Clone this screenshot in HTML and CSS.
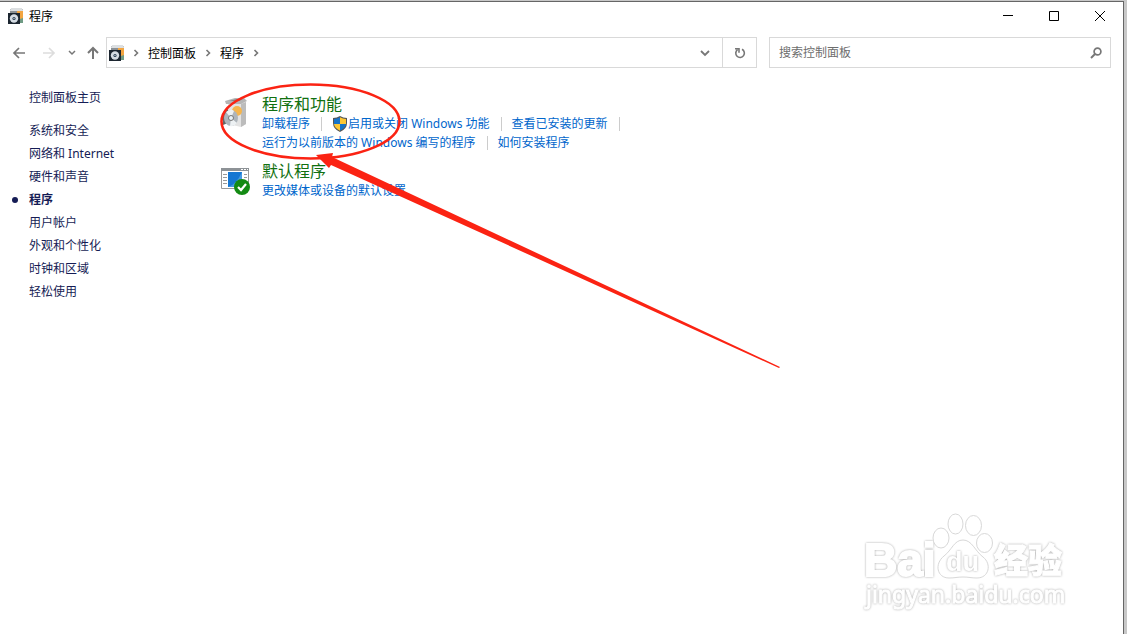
FILE: index.html
```html
<!DOCTYPE html>
<html lang="zh-CN">
<head>
  <meta charset="UTF-8">
  <meta name="viewport" content="width=device-width, initial-scale=1">
  <title>程序</title>
  <link rel="stylesheet" href="styles.css">
</head>
<body>
  <svg class="defs" width="0" height="0" aria-hidden="true">
    <symbol id="icon-programs" viewBox="0 0 16 16">
      <path d="M2 1h13l-1 3H3z" fill="#b9bdc1"/>
      <path d="M3 0h11v3H3z" fill="#dcdfe1"/>
      <path d="M2 3h7v3H2z" fill="#8b9094"/>
      <path d="M11 9h4v6h-4z" fill="#6f9b84"/>
      <path d="M9 3h6v7l-3 1-3-4z" fill="#f2a541"/>
      <path d="M0 5h12v11H0z" fill="#1c2630"/>
      <circle cx="6" cy="10.500" r="4.200" fill="#d5dce3"/>
      <circle cx="6" cy="10.500" r="1.600" fill="#2b4054"/>
      <circle cx="6" cy="10.500" r=".6" fill="#fff"/>
    </symbol>
    <symbol id="icon-chevron" viewBox="0 0 6 8">
      <path d="M1.500 1L4.500 4 1.500 7" fill="none" stroke="#777" stroke-width="1.600"/>
    </symbol>
  </svg>

  <div class="window">
    <header class="titlebar">
      <svg class="app-icon"><use href="#icon-programs"/></svg>
      <h1>程序</h1>
      <div class="window-buttons">
        <button type="button" aria-label="最小化"><svg width="12" height="12"><path d="M1 5.500h10" stroke="#000"/></svg></button>
        <button type="button" aria-label="最大化"><svg width="12" height="12"><path d="M1.500 1.500h9v9h-9z" fill="none" stroke="#000"/></svg></button>
        <button type="button" aria-label="关闭"><svg width="12" height="12"><path d="M1 1l10 10M11 1L1 11" stroke="#000"/></svg></button>
      </div>
    </header>

    <div class="toolbar">
      <div class="history">
        <button type="button" aria-label="后退"><svg width="14" height="12"><path d="M13 6H2M7 1L2 6l5 5" fill="none" stroke="#777" stroke-width="1.700"/></svg></button>
        <button type="button" aria-label="前进" disabled><svg width="14" height="12"><path d="M1 6h11M7 1l5 5-5 5" fill="none" stroke="#ddd" stroke-width="1.700"/></svg></button>
        <button type="button" class="recent" aria-label="最近浏览的位置"><svg width="8" height="6"><path d="M1 1l3 3 3-3" fill="none" stroke="#777" stroke-width="1.500"/></svg></button>
        <button type="button" class="up" aria-label="上移"><svg width="12" height="14"><path d="M6 13V2M1 7l5-5 5 5" fill="none" stroke="#777" stroke-width="2"/></svg></button>
      </div>
      <div class="address">
        <svg class="app-icon"><use href="#icon-programs"/></svg>
        <nav class="crumbs" aria-label="地址">
          <svg><use href="#icon-chevron"/></svg>
          <a href="#">控制面板</a>
          <svg><use href="#icon-chevron"/></svg>
          <a href="#">程序</a>
          <svg><use href="#icon-chevron"/></svg>
        </nav>
        <button type="button" class="dropdown" aria-label="以前的位置"><svg width="10" height="8"><path d="M1 2l4 4 4-4" fill="none" stroke="#777" stroke-width="1.800"/></svg></button>
        <button type="button" class="refresh" aria-label="刷新"><svg width="12" height="12"><path d="M8 2.300A4.300 4.300 0 1 1 3.500 2.700M1 1.800h4v4" fill="none" stroke="#777" stroke-width="1.600"/></svg></button>
      </div>
      <form class="search">
        <input type="text" placeholder="搜索控制面板" aria-label="搜索控制面板">
        <button type="button" aria-label="搜索"><svg width="12" height="12"><circle cx="7.500" cy="4.500" r="3.400" fill="none" stroke="#777" stroke-width="1.700"/><path d="M5 7l-4 4" stroke="#777" stroke-width="2"/></svg></button>
      </form>
    </div>

    <div class="content">
      <nav class="sidebar">
        <a class="home" href="#">控制面板主页</a>
        <ul>
          <li><a href="#">系统和安全</a></li>
          <li><a href="#">网络和 Internet</a></li>
          <li><a href="#">硬件和声音</a></li>
          <li class="current"><a href="#">程序</a></li>
          <li><a href="#">用户帐户</a></li>
          <li><a href="#">外观和个性化</a></li>
          <li><a href="#">时钟和区域</a></li>
          <li><a href="#">轻松使用</a></li>
        </ul>
      </nav>

      <main>
        <section class="category">
          <svg class="category-icon" viewBox="0 0 32 32">
            <path d="M8 5h14l4-1v22l-5 3-13-3z" fill="#e3e3e3"/>
            <path d="M21 6l5-2v22l-5 3z" fill="#bcbcbc"/>
            <path d="M5 3l10-3h9l3 3-6 3H6z" fill="#b5b5b5"/>
            <path d="M9 3l8-2h6l-4 2z" fill="#858585"/>
            <circle cx="17" cy="13" r="5" fill="#f5b54d"/>
            <path d="M3 14l5-3v14l-5 2z" fill="#666"/>
            <ellipse cx="11" cy="20" rx="7" ry="8" fill="#aeb5bb"/>
            <path d="M11 20L6 14q5-4 8-1zM11 20l6 5q-3 4-7 3z" fill="#edf1f3"/>
            <circle cx="11" cy="20" r="2.500" fill="#e9f2f7" stroke="#777"/>
          </svg>
          <div>
            <h2><a href="#">程序和功能</a></h2>
            <ul class="tasks">
              <li><a href="#">卸载程序</a></li>
              <li>
                <svg class="shield" viewBox="0 0 16 16">
                  <path d="M8 0q3 2 7 2v5q0 6-7 9-7-3-7-9V2q4 0 7-2z" fill="#555"/>
                  <path d="M8 1.200V8H2V3q3 0 6-1.800z" fill="#1673c8"/>
                  <path d="M8 1.200Q11 3 14 3v5H8z" fill="#fdc734"/>
                  <path d="M2 8h6v6.800Q2.500 12 2 8z" fill="#fdc734"/>
                  <path d="M8 8h6q-.5 4-6 6.800z" fill="#1673c8"/>
                </svg>
                <a href="#">启用或关闭 Windows 功能</a>
              </li>
              <li><a href="#">查看已安装的更新</a></li>
            </ul>
            <ul class="tasks last">
              <li><a href="#">运行为以前版本的 Windows 编写的程序</a></li>
              <li><a href="#">如何安装程序</a></li>
            </ul>
          </div>
        </section>

        <section class="category">
          <svg class="category-icon" viewBox="0 0 32 32">
            <path d="M1.500 3.500h27v20h-27z" fill="#fff" stroke="#999"/>
            <path d="M1 3h28v3H1z" fill="#8d9296"/>
            <path d="M21 4h2v1h-2zM24 4h2v1h-2zM27 4h1v1h-1z" fill="#fff"/>
            <path d="M3 9.500h4M3 12.500h4M3 15.500h4M3 18.500h4M24 9.500h3M24 12.500h3" stroke="#999"/>
            <path d="M8 7h14v15H8z" fill="#1677d2"/>
            <path d="M8 22q8-2 14-15v15z" fill="#4799e2"/>
            <circle cx="22" cy="22" r="8" fill="#138a13"/>
            <path d="M18 22l3 3 5-6" fill="none" stroke="#fff" stroke-width="2.200"/>
          </svg>
          <div>
            <h2><a href="#">默认程序</a></h2>
            <ul class="tasks last">
              <li><a href="#">更改媒体或设备的默认设置</a></li>
            </ul>
          </div>
        </section>

        <!-- hand-drawn hint over the first category -->
        <svg class="annotation" width="580" height="300" viewBox="210 78 580 300" aria-hidden="true">
          <ellipse cx="310.500" cy="121.500" rx="89" ry="37" fill="none" stroke="#fb2313" stroke-width="2.600"/>
          <path d="M316 155l17-2-1 4 448 210-1 1-448-203-2 3z" fill="#fb2313"/>
        </svg>
      </main>
    </div>

    <svg class="watermark" width="220" height="110" viewBox="860 508 220 110" role="img" aria-label="Baidu 经验">
      <text class="brand" x="864" y="576">Bai</text>
      <g class="paw">
        <ellipse cx="941" cy="538" rx="8" ry="10"/>
        <ellipse cx="955.500" cy="524" rx="7.500" ry="10"/>
        <ellipse cx="973.500" cy="525.500" rx="8" ry="10"/>
        <ellipse cx="984.500" cy="543" rx="8" ry="9.500"/>
        <path d="M963 540c-9 0-11 10-19 16-10 8-7 22 5 22 6 0 8-1 14-1s8 1 14 1c12 0 15-14 6-21-8-6-11-17-20-17z"/>
      </g>
      <text class="du" x="946" y="571">du</text>
      <text class="cn" x="994" y="573">经验</text>
      <text class="url" x="866" y="603">jingyan.baidu.com</text>
    </svg>
  </div>
</body>
</html>
```
FILE: styles.css
```css
* {
  box-sizing: border-box;
}
body {
  margin: 0;
  padding: 1px 3px 0 0;
  background-color: #c8c8c8;
  color: #000;
  font-family: "Noto Sans", "Noto Sans CJK SC", sans-serif;
  font-size: 12px;
}
a {
  text-decoration: none;
}
button {
  display: flex;
  align-items: center;
  justify-content: center;
  padding: 0;
  border: none;
  background: none;
}
svg {
  display: block;
  flex: none;
}
h1, h2, ul {
  margin: 0;
  padding: 0;
  font-weight: normal;
  list-style: none;
}
.defs {
  position: absolute;
}
.window {
  position: relative;
  min-height: calc(100vh - 1px);
  border-top: 1px solid #666;
  border-right: 1px solid #666;
  background-color: #fff;
}
.app-icon {
  width: 16px;
  height: 16px;
}

/* title bar */
.titlebar {
  display: flex;
  align-items: center;
  gap: 5px;
  height: 28px;
  padding-left: 8px;
}
.titlebar h1 {
  flex: 1;
  font-size: 12px;
}
.window-buttons {
  display: flex;
}
.window-buttons button {
  width: 46px;
  height: 28px;
}

/* toolbar */
.toolbar {
  display: flex;
  align-items: center;
  margin-top: 7px;
  padding-right: 12px;
}
.history {
  display: flex;
  align-items: center;
  width: 106px;
  padding-left: 12px;
}
.history button {
  width: 14px;
  height: 30px;
  margin-right: 16px;
}
.history .recent {
  width: 8px;
  margin: 0 10px 0 -4px;
}
.history .up {
  margin: 0;
}
.address, .search {
  display: flex;
  align-items: center;
  height: 31px;
  border: 1px solid #d9d9d9;
}
.address {
  flex: 1;
  padding-left: 2px;
}
.crumbs {
  display: flex;
  align-items: center;
  flex: 1;
  gap: 9px;
  padding-left: 8px;
}
.crumbs svg {
  width: 6px;
  height: 8px;
}
.crumbs a {
  color: #000;
}
.address button {
  width: 34px;
  height: 29px;
}
.address .refresh {
  border-left: 1px solid #d9d9d9;
}
.search {
  width: 342px;
  margin-left: 12px;
}
.search input {
  flex: 1;
  min-width: 0;
  padding: 0 9px;
  border: none;
  outline: none;
  font: inherit;
}
.search input::placeholder {
  color: #6d6d6d;
  opacity: 1;
}
.search button {
  width: 28px;
}

/* content */
.content {
  display: flex;
  padding-top: 18px;
}
.sidebar {
  width: 220px;
  padding-left: 29px;
  line-height: 23px;
}
.sidebar a {
  color: #151c55;
}
.sidebar .home {
  display: block;
  margin-bottom: 10px;
}
.sidebar .current {
  display: flex;
  align-items: center;
  gap: 11px;
  margin-left: -17px;
  font-weight: bold;
}
.current::before {
  content: "";
  width: 6px;
  height: 6px;
  border-radius: 50%;
  background-color: #151c55;
}
main {
  flex: 1;
  padding-top: 8px;
}
.category {
  display: flex;
  gap: 10px;
  margin-bottom: 9px;
}
.category-icon {
  width: 32px;
  height: 32px;
  margin-top: 4px;
}
.category h2 {
  font-size: 16px;
  line-height: 20px;
}
.category h2 a {
  color: #107010;
}
.tasks {
  display: flex;
  line-height: 19px;
}
.tasks li {
  display: flex;
  align-items: center;
}
.tasks li::after {
  content: "";
  width: 1px;
  height: 14px;
  margin: 0 10px 0 11px;
  background-color: #ccc;
}
.tasks.last li:last-child::after {
  display: none;
}
.tasks a {
  color: #0066cc;
}
.shield {
  width: 16px;
  height: 16px;
}
.annotation {
  position: absolute;
  top: 76px;
  left: 210px;
  pointer-events: none;
}

/* watermark */
.watermark {
  position: absolute;
  right: 43px;
  bottom: 16px;
}
.watermark text {
  fill: #fff;
  stroke: #fff;
  stroke-width: 2px;
  filter: drop-shadow(0 0 1px #aaa);
}
.paw {
  fill: #fff;
  stroke: #d8d8d8;
  stroke-width: 1px;
}
.watermark .brand {
  font: bold 46px "Liberation Sans", sans-serif;
}
.watermark .du {
  stroke-width: 0;
  font: bold 27px "Liberation Sans", sans-serif;
}
.watermark .cn {
  stroke-width: 1px;
  font: 900 34px "Noto Sans CJK SC", sans-serif;
}
.watermark .url {
  stroke-width: 1px;
  font: 23px "Noto Sans", sans-serif;
}
```
